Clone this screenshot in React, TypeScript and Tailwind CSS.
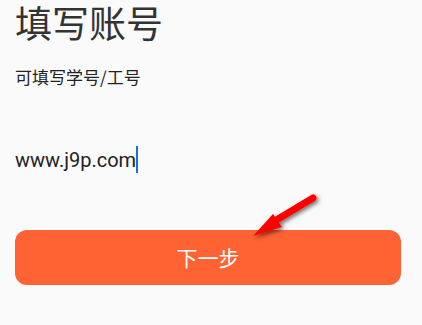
import React from "react";

export default function App() {
  return (
    <div
      className="relative w-[422px] h-[325px] bg-[#fafafa] overflow-hidden px-[15px]"
      style={{ fontFamily: '"Noto Sans CJK SC", Roboto, sans-serif' }}
    >
      <h1 className="text-[37px] leading-[44px] text-[#333333]">填写账号</h1>
      <p className="mt-[22px] text-[17px] leading-[22px] text-[#222222]">可填写学号/工号</p>
      <div className="mt-[57px] h-[28px] flex items-center text-[20px] text-[#222222]" style={{ fontFamily: 'Roboto, "Noto Sans CJK SC", sans-serif' }}>
        <span className="pt-[2px]">www.j9p.com</span>
        <span className="w-[2px] h-[27px] bg-[#1a6fe0]" />
      </div>
      <button className="mt-[57px] w-[386px] h-[55px] rounded-[12px] bg-[#ff6233] text-white text-[21px] flex items-center justify-center">
        下一步
      </button>
      <svg className="absolute left-[240px] top-[185px]" width="90" height="60" viewBox="0 0 90 60">
        <defs>
          <filter id="sh" x="-30%" y="-30%" width="160%" height="160%">
            <feDropShadow dx="2" dy="2" stdDeviation="2" floodColor="#000" floodOpacity="0.55" />
          </filter>
        </defs>
        <g filter="url(#sh)">
          <line x1="73" y1="13" x2="33" y2="37" stroke="#ff0000" strokeWidth="7" strokeLinecap="round" />
          <polygon points="13,51 33,29 42,42" fill="#ff0000" />
        </g>
      </svg>
    </div>
  );
}
